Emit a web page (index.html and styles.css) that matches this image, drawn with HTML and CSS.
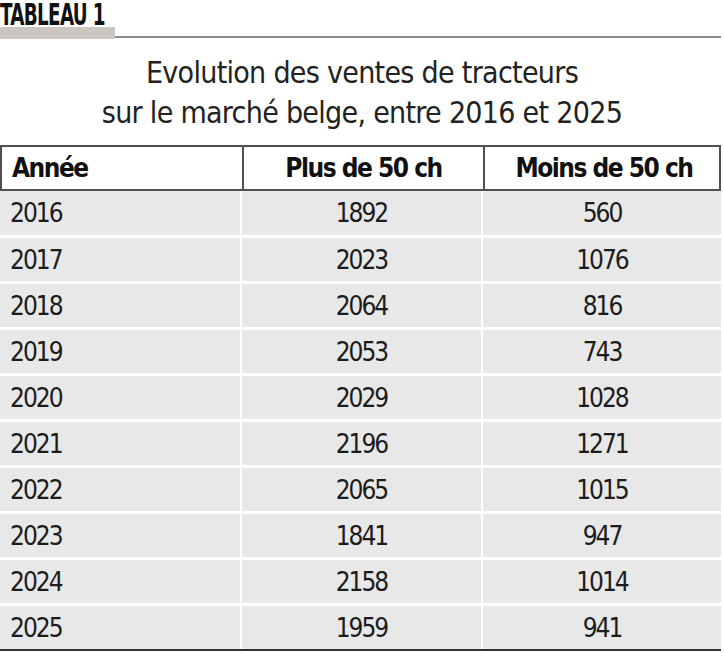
FILE: index.html
```html
<!DOCTYPE html>
<html lang="fr">
<head>
<meta charset="utf-8">
<title>Tableau 1</title>
<link rel="stylesheet" href="styles.css">
</head>
<body>
<div class="page">
  <div class="kicker">
    <div class="kicker-label">TABLEAU 1</div>
    <div class="kicker-rule">
      <span class="kicker-bar"></span>
      <span class="kicker-line"></span>
    </div>
  </div>
  <h1 class="title">Evolution des ventes de tracteurs<br>sur le marché belge, entre 2016 et 2025</h1>
  <div class="table">
    <div class="head">
      <div class="hc first">Année</div>
      <div class="hc">Plus de 50 ch</div>
      <div class="hc">Moins de 50 ch</div>
    </div>
    <div class="body">
      <div class="row"><div class="c first">2016</div><div class="c">1892</div><div class="c">560</div></div>
      <div class="row"><div class="c first">2017</div><div class="c">2023</div><div class="c">1076</div></div>
      <div class="row"><div class="c first">2018</div><div class="c">2064</div><div class="c">816</div></div>
      <div class="row"><div class="c first">2019</div><div class="c">2053</div><div class="c">743</div></div>
      <div class="row"><div class="c first">2020</div><div class="c">2029</div><div class="c">1028</div></div>
      <div class="row"><div class="c first">2021</div><div class="c">2196</div><div class="c">1271</div></div>
      <div class="row"><div class="c first">2022</div><div class="c">2065</div><div class="c">1015</div></div>
      <div class="row"><div class="c first">2023</div><div class="c">1841</div><div class="c">947</div></div>
      <div class="row"><div class="c first">2024</div><div class="c">2158</div><div class="c">1014</div></div>
      <div class="row"><div class="c first">2025</div><div class="c">1959</div><div class="c">941</div></div>
    </div>
  </div>
</div>
</body>
</html>
```
FILE: styles.css
```css
html, body {
  margin: 0;
  padding: 0;
  background: #ffffff;
}
body {
  font-family: "DejaVu Sans Condensed", "Liberation Sans", sans-serif;
  color: #1c1c1c;
}
.page {
  width: 724px;
  height: 669px;
  overflow: hidden;
}
.kicker {
  display: flex;
  flex-direction: column;
}
.kicker-label {
  font-weight: bold;
  font-size: 30px;
  line-height: 24px;
  height: 27px;
  padding-top: 3px;
  box-sizing: border-box;
  letter-spacing: -1px;
  color: #111;
  white-space: nowrap;
  transform: scaleX(0.68);
  transform-origin: left center;
}
.kicker-rule {
  display: flex;
  align-items: flex-end;
  height: 12px;
  width: 721px;
}
.kicker-bar {
  width: 115px;
  height: 12px;
  background: #c9c7c0;
}
.kicker-line {
  flex: 1;
  height: 2px;
  background: #8c8c8c;
  margin-bottom: 1px;
}
.title {
  margin: 14px 0 0 0;
  text-align: center;
  font-weight: normal;
  font-size: 30px;
  letter-spacing: -0.7px;
  line-height: 40px;
  color: #222;
  height: 92px;
}
.table {
  width: 721px;
}
.head {
  display: grid;
  grid-template-columns: 240px 241px 240px;
  border: 2px solid #505050;
  height: 46px;
  box-sizing: border-box;
}
.hc {
  display: flex;
  align-items: center;
  justify-content: center;
  font-weight: bold;
  font-size: 26px;
  letter-spacing: -1.5px;
  color: #111;
  border-left: 2px solid #505050;
}
.hc.first {
  justify-content: flex-start;
  padding-left: 10px;
  border-left: none;
}
.body {
  display: flex;
  flex-direction: column;
  border-bottom: 2px solid #333;
}
.row {
  display: grid;
  grid-template-columns: 240px 241px 240px;
  height: 46px;
  box-sizing: border-box;
  border-top: 3px solid #ffffff;
}
.row:first-child {
  border-top: none;
  height: 44px;
}
.c {
  display: flex;
  align-items: center;
  justify-content: center;
  background: #e8e8e8;
  font-size: 26px;
  letter-spacing: -2px;
  color: #1c1c1c;
  border-left: 2px solid #ffffff;
}
.c.first {
  justify-content: flex-start;
  padding-left: 10px;
  border-left: none;
}
```
